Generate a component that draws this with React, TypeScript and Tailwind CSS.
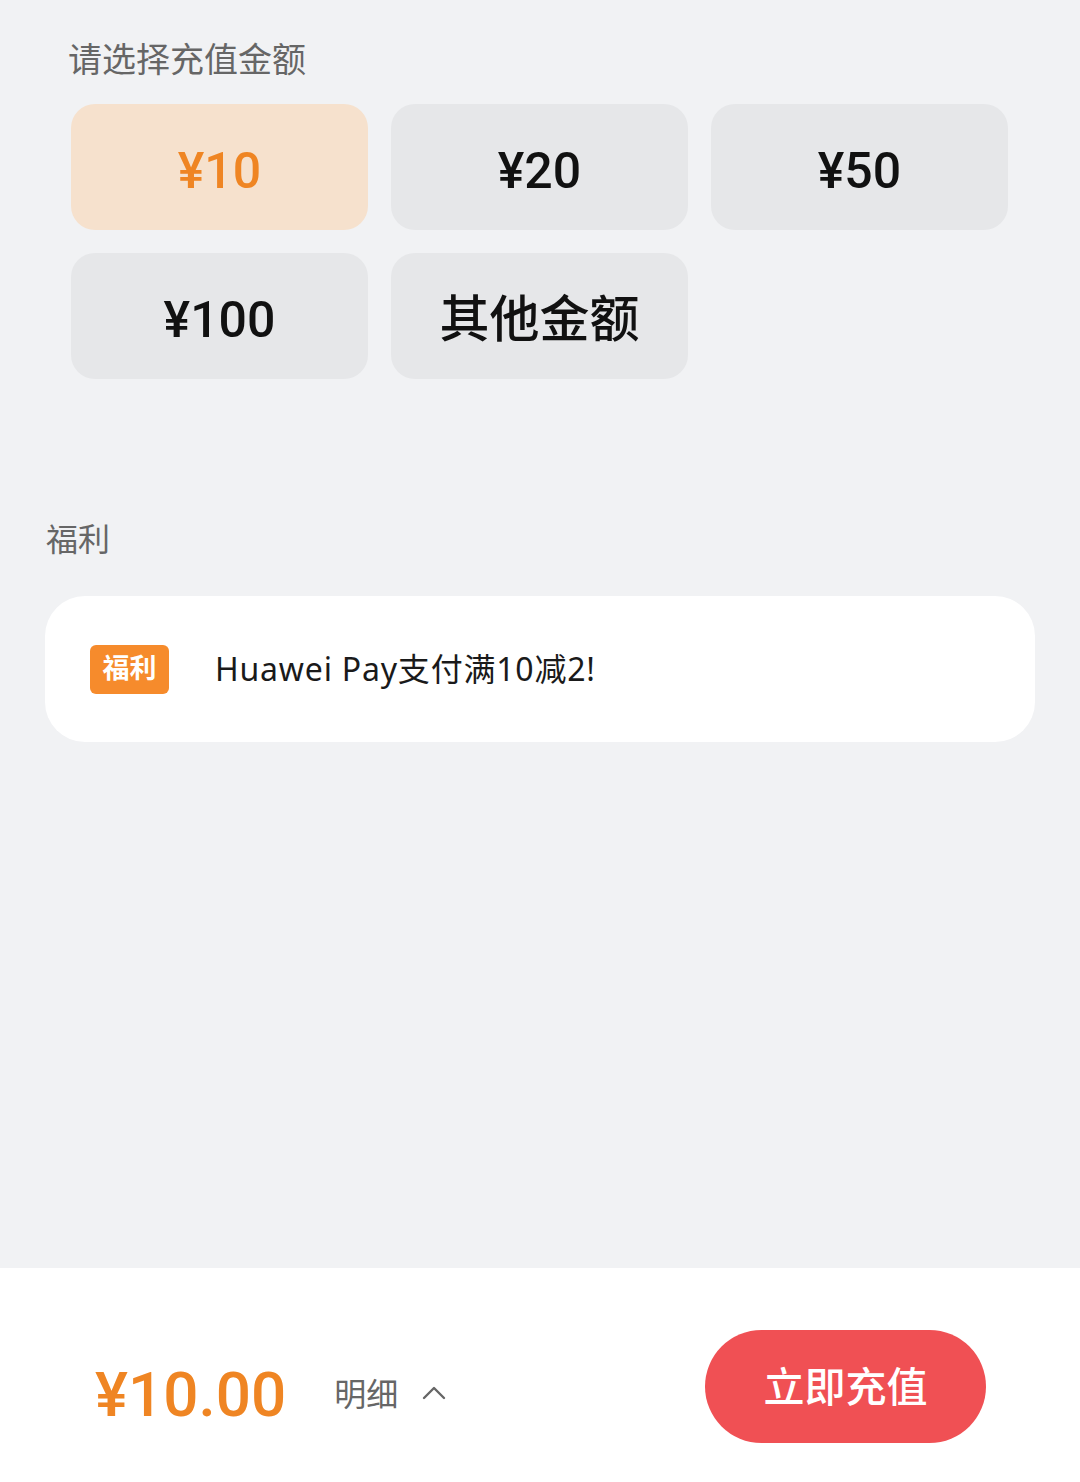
import { useState } from "react";

const amounts = [
  { key: "10", label: "¥10" },
  { key: "20", label: "¥20" },
  { key: "50", label: "¥50" },
  { key: "100", label: "¥100" },
  { key: "other", label: "其他金额" },
];

const fontStack = {
  fontFamily: '"Roboto", "Noto Sans CJK SC", "Noto Sans", sans-serif',
};

export default function App() {
  const [selected, setSelected] = useState("10");

  return (
    <div
      className="flex min-h-[1482px] w-full flex-col bg-[#f1f2f4]"
      style={fontStack}
    >
      <section className="pt-[40px]">
        <h2 className="pl-[68px] text-[34px] leading-[40px] text-[#666666]">
          请选择充值金额
        </h2>

        <div className="ml-[71px] mt-[24px] grid w-[937px] grid-cols-3 gap-[23px]">
          {amounts.map((item) => {
            const active = item.key === selected;
            return (
              <button
                key={item.key}
                type="button"
                onClick={() => setSelected(item.key)}
                className={
                  active
                    ? "flex h-[126px] items-center justify-center rounded-[24px] bg-[#f6e1cd] pt-[8px] text-[50px] font-medium text-[#ef8523]"
                    : "flex h-[126px] items-center justify-center rounded-[24px] bg-[#e6e7e9] pt-[8px] text-[50px] font-medium text-[#111111]"
                }
              >
                {item.label}
              </button>
            );
          })}
        </div>
      </section>

      <section className="mt-[141px]">
        <h2 className="pl-[46px] text-[32px] leading-[40px] text-[#666666]">
          福利
        </h2>

        <div className="ml-[45px] mt-[36px] flex h-[146px] w-[990px] items-center rounded-[40px] bg-white pl-[45px]">
          <span className="flex h-[49px] w-[79px] items-center justify-center rounded-[6px] bg-[#f68b2c] text-[27px] font-bold text-white">
            福利
          </span>
          <span className="ml-[46px] font-['Noto_Sans','Noto_Sans_CJK_SC',sans-serif] text-[32px] tracking-[0.8px] text-[#1a1a1a]">
            Huawei Pay支付满10减2!
          </span>
        </div>
      </section>

      <div className="flex-1" />

      <footer className="flex h-[214px] items-start bg-white pt-[62px]">
        <div className="flex h-[113px] items-center pl-[95px] pt-[16px]">
          <span className="text-[62px] leading-none text-[#ef8523] [font-weight:500]">
            ¥10.00
          </span>
          <span className="ml-[48px] text-[32px] text-[#666666]">明细</span>
          <svg
            className="ml-[24px] -mt-[4px]"
            width="24"
            height="14"
            viewBox="0 0 24 14"
            fill="none"
          >
            <path
              d="M2 12L12 2L22 12"
              stroke="#666666"
              strokeWidth="2.4"
              strokeLinecap="round"
              strokeLinejoin="round"
            />
          </svg>
        </div>

        <button
          type="button"
          className="ml-auto mr-[94px] flex h-[113px] w-[281px] items-center justify-center rounded-full bg-[#f05054] pt-[4px] text-[41px] font-medium text-white"
        >
          立即充值
        </button>
      </footer>
    </div>
  );
}
